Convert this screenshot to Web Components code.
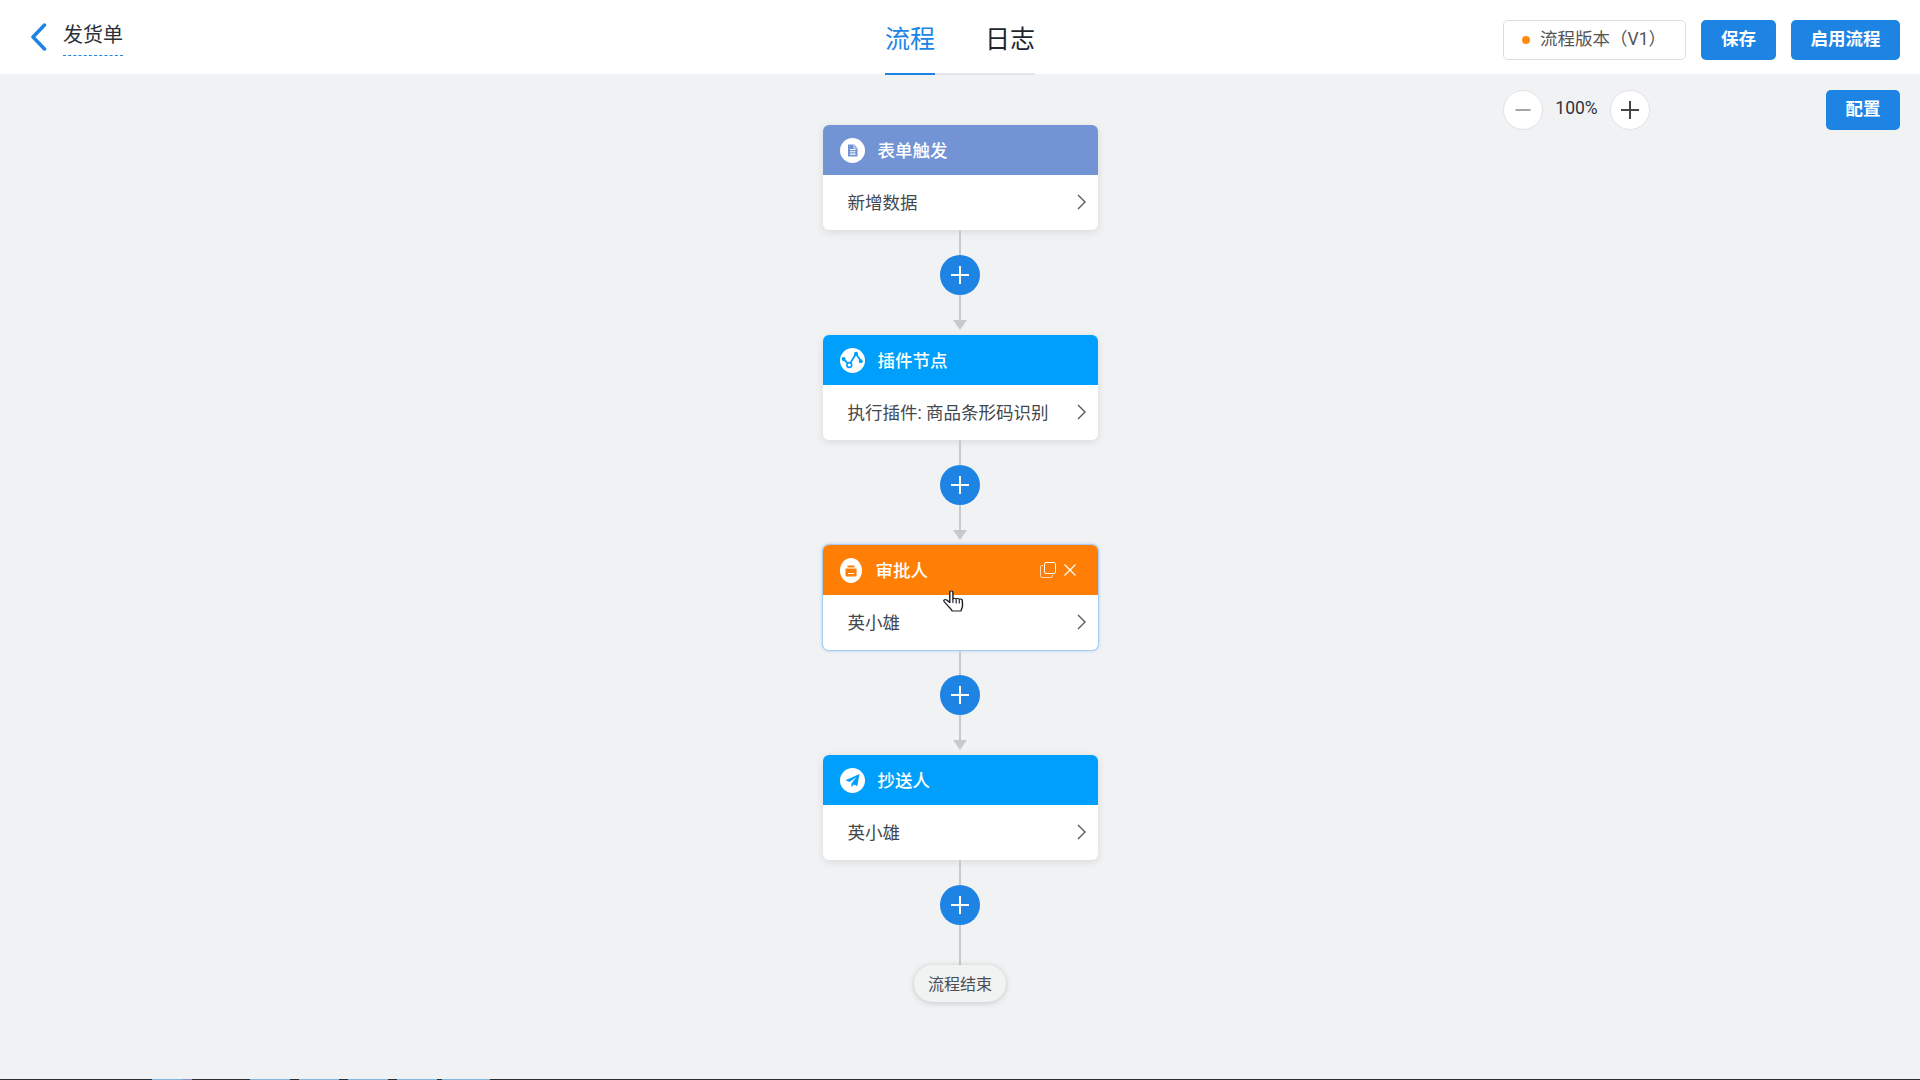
<!DOCTYPE html>
<html lang="zh">
<head>
<meta charset="utf-8">
<title>发货单</title>
<style>
  html, body { margin: 0; height: 100%; }
  body { font-family: Roboto, "Noto Sans CJK SC", sans-serif; overflow: hidden; }
</style>
</head>
<body>
<flow-app>
  <top-bar slot="top">
    <back-title slot="left">发货单</back-title>
    <tab-item slot="center" active>流程</tab-item>
    <tab-item slot="center" wide>日志</tab-item>
    <version-box slot="right">流程版本（V1）</version-box>
    <action-button slot="right" width="75">保存</action-button>
    <action-button slot="right" width="109">启用流程</action-button>
  </top-bar>

  <flow-node color="#7294d4" label="表单触发">
    <svg slot="icon" width="25" height="25" viewBox="0 0 25 25"><circle cx="12.5" cy="12.5" r="12.5" fill="#fff"/><path d="M8 6.5h6.2L17.5 10v8.5H8z" fill="#7294d4"/><path d="M10 11.5h5.500M10 13.800h5.500M10 16.100h5.500" stroke="#fff" stroke-width="1.100"/><path d="M14 6.500v3.500h3.500" fill="none" stroke="#fff" stroke-width=".8"/></svg>
    新增数据
  </flow-node>
  <flow-link arrow></flow-link>

  <flow-node color="#009ffb" label="插件节点">
    <svg slot="icon" width="25" height="25" viewBox="0 0 25 25"><circle cx="12.500" cy="12.500" r="12.500" fill="#fff"/><path d="M3.300 11l6 5.700L16 5.700l5 7.600" fill="none" stroke="#009ffb" stroke-width="1.800"/><circle cx="3.600" cy="11" r="2" fill="#009ffb"/><circle cx="16" cy="5.700" r="2" fill="#009ffb"/><circle cx="20.800" cy="13.300" r="2" fill="#009ffb"/><circle cx="9.300" cy="17" r="2.400" fill="#fff" stroke="#009ffb" stroke-width="1.600"/></svg>
    执行插件: 商品条形码识别
  </flow-node>
  <flow-link arrow></flow-link>

  <flow-node color="#ff7f06" label="审批人" active>
    <svg slot="icon" width="22" height="25" viewBox="0 0 22 25"><ellipse cx="11" cy="12.500" rx="11" ry="12.500" fill="#fff"/><path d="M7.500 7.500h7v2h-7zM5.500 10.500h11v7a1 1 0 0 1-1 1h-9a1 1 0 0 1-1-1z" fill="#ff7f06"/><path d="M8 15.500h6" stroke="#fff" stroke-width="1"/></svg>
    <svg slot="tools" width="36" height="16" viewBox="0 0 36 16" fill="none" stroke="#fff"><rect x="4.500" y=".500" width="11" height="11" rx="1.500" opacity=".95"/><path d="M3 3.500H2A1.500 1.500 0 0 0 .500 5v9A1.500 1.500 0 0 0 2 15.500h9a1.500 1.500 0 0 0 1.500-1.500v-1" opacity=".7"/><path d="M24.500 2.500l11 11M35.500 2.500l-11 11" stroke-width="1.200"/></svg>
    英小雄
  </flow-node>
  <flow-link arrow></flow-link>

  <flow-node color="#009ffb" label="抄送人">
    <svg slot="icon" width="25" height="25" viewBox="0 0 25 25"><circle cx="12.500" cy="12.500" r="12.500" fill="#fff"/><path d="M19.500 6L5.500 12.200l4 1.800 7-5-5 6.200v4l2.300-2.800 3.500 1.600z" fill="#009ffb"/></svg>
    英小雄
  </flow-node>
  <flow-link></flow-link>
  <flow-end>流程结束</flow-end>

  <zoom-bar slot="tools">
    <action-button slot="action" width="74">配置</action-button>
  </zoom-bar>

  <hand-cursor slot="overlay"></hand-cursor>
  <task-edge slot="bottom"></task-edge>
</flow-app>

<script>
class FlowApp extends HTMLElement {
  constructor() {
    super();
    this.attachShadow({ mode: "open" });
    this.shadowRoot.innerHTML = `
      <style>
        :host { display: flex; flex-direction: column; width: 1920px; height: 1080px; background: #f1f2f4; position: relative; overflow: hidden; }
        .canvas { flex: 1; display: grid; grid-template-columns: 1fr 275px 1fr; min-height: 0; }
        .flow { grid-column: 2; display: flex; flex-direction: column; align-items: center; padding-top: 51px; }
        .side { grid-column: 3; padding: 16px 20px 0 0; display: flex; justify-content: flex-end; align-items: flex-start; }
      </style>
      <slot name="top"></slot>
      <div class="canvas">
        <div class="flow"><slot></slot></div>
        <div class="side"><slot name="tools"></slot></div>
      </div>
      <slot name="overlay"></slot>
      <slot name="bottom"></slot>
    `;
  }
}

class TopBar extends HTMLElement {
  constructor() {
    super();
    this.attachShadow({ mode: "open" });
    this.shadowRoot.innerHTML = `
      <style>
        :host { display: grid; grid-template-columns: 1fr auto 1fr; height: 74px; background: #fff; flex: none; }
        .left { display: flex; padding-left: 30px; }
        .center { display: flex; height: 75px; position: relative; z-index: 1; }
        .right { display: flex; justify-content: flex-end; align-items: flex-start; gap: 15px; padding: 20px 20px 0 0; }
      </style>
      <div class="left"><slot name="left"></slot></div>
      <div class="center"><slot name="center"></slot></div>
      <div class="right"><slot name="right"></slot></div>
    `;
  }
}

class BackTitle extends HTMLElement {
  constructor() {
    super();
    this.attachShadow({ mode: "open" });
    this.shadowRoot.innerHTML = `
      <style>
        :host { display: flex; align-items: flex-start; color: #2c3038; font-size: 20px; }
        svg { margin-top: 23px; display: block; }
        .name { margin-left: 16px; margin-top: 20px; height: 35px; line-height: 30px; border-bottom: 1px dashed #1e84e4; }
      </style>
      <svg width="17" height="28" viewBox="0 0 17 28" fill="none"><path d="M14.500 2L3 14l11.500 12" stroke="#1e84e4" stroke-width="3.500" stroke-linecap="round" stroke-linejoin="round"/></svg>
      <div class="name"><slot></slot></div>
    `;
  }
}

class TabItem extends HTMLElement {
  constructor() {
    super();
    this.attachShadow({ mode: "open" });
    this.shadowRoot.innerHTML = `
      <style>
        :host { display: flex; box-sizing: border-box; width: 50px; height: 75px; justify-content: center; padding-top: 22px; font-size: 25px; line-height: 36px; color: #22262e; border-bottom: 2px solid #e4e5ea; }
        :host([wide]) { width: 100px; justify-content: flex-end; }
        :host([active]) { color: #1e84e4; border-bottom-color: #1e84e4; }
      </style>
      <slot></slot>
    `;
  }
}

class VersionBox extends HTMLElement {
  constructor() {
    super();
    this.attachShadow({ mode: "open" });
    this.shadowRoot.innerHTML = `
      <style>
        :host { display: flex; align-items: center; box-sizing: border-box; width: 183px; height: 40px; padding: 0 0 0 18px; gap: 10px; background: #fff; border: 1px solid #dcdde2; border-radius: 5px; color: #555; font-size: 17.500px; }
        i { width: 8px; height: 8px; border-radius: 50%; background: #ff8a0c; flex: none; }
        span { position: relative; top: -3px; }
      </style>
      <i></i><span><slot></slot></span>
    `;
  }
}

class ActionButton extends HTMLElement {
  constructor() {
    super();
    this.attachShadow({ mode: "open" });
    this.shadowRoot.innerHTML = `
      <style>
        :host { display: flex; align-items: center; justify-content: center; box-sizing: border-box; height: 40px; padding-bottom: 5px; background: #1e84e4; color: #fff; border-radius: 5px; font-size: 17.500px; font-weight: 700; flex: none; }
      </style>
      <slot></slot>
    `;
  }
  connectedCallback() {
    this.style.width = this.getAttribute("width") + "px";
  }
}

class ZoomBar extends HTMLElement {
  constructor() {
    super();
    this.attachShadow({ mode: "open" });
    this.shadowRoot.innerHTML = `
      <style>
        :host { display: flex; align-items: center; width: 397px; height: 40px; }
        .round { box-sizing: border-box; width: 40px; height: 40px; border-radius: 50%; background: #fff; border: 1px solid #e2e3e7; display: flex; align-items: center; justify-content: center; }
        .pct { width: 67px; text-align: center; font-size: 17.500px; color: #30343b; position: relative; top: -2px; }
        .gap { flex: 1; }
      </style>
      <div class="round"><svg width="16" height="16" viewBox="0 0 16 16"><path d="M.5 8h15" stroke="#888" stroke-width="1.500"/></svg></div>
      <div class="pct">100%</div>
      <div class="round"><svg width="18" height="18" viewBox="0 0 18 18"><path d="M0 9h18M9 0v18" stroke="#444" stroke-width="2"/></svg></div>
      <div class="gap"></div>
      <slot name="action"></slot>
    `;
  }
}

class FlowNode extends HTMLElement {
  constructor() {
    super();
    this.attachShadow({ mode: "open" });
    this.shadowRoot.innerHTML = `
      <style>
        :host { display: block; width: 275px; height: 105px; flex: none; background: #fff; border-radius: 6px; box-shadow: 0 2px 8px rgba(0,0,0,.1); font-size: 17.500px; }
        :host([active]) { box-shadow: 0 0 0 1px #a5cdf5, 0 0 3px 1px rgba(110,175,240,.5); }
        .head { display: flex; align-items: center; height: 50px; padding: 0 22px 0 17px; border-radius: 6px 6px 0 0; color: #fff; font-weight: 500; }
        .icon { display: flex; margin-right: 13px; }
        :host([active]) .icon { margin-right: 14px; }
        .label { flex: 1; position: relative; top: -1px; }
        .body { display: flex; align-items: center; justify-content: space-between; height: 55px; padding: 0 12px 0 25px; color: #43474e; }
        .body span { position: relative; top: -1px; }
        .body svg { position: relative; top: -1px; }
        ::slotted([slot=tools]) { display: block; }
      </style>
      <div class="head">
        <span class="icon"><slot name="icon"></slot></span>
        <span class="label"></span>
        <slot name="tools"></slot>
      </div>
      <div class="body">
        <span><slot></slot></span>
        <svg width="9" height="16" viewBox="0 0 9 16" fill="none"><path d="M1 1l7 7-7 7" stroke="#55585e" stroke-width="1.400"/></svg>
      </div>
    `;
  }
  connectedCallback() {
    this.shadowRoot.querySelector(".head").style.background = this.getAttribute("color");
    this.shadowRoot.querySelector(".label").textContent = this.getAttribute("label");
  }
}

class FlowLink extends HTMLElement {
  constructor() {
    super();
    this.attachShadow({ mode: "open" });
    this.shadowRoot.innerHTML = `
      <style>
        :host { display: flex; flex-direction: column; align-items: center; height: 105px; flex: none; }
        .line { width: 2px; height: 25px; background: #c8c9cc; flex: none; }
        :host(:not([arrow])) .add + .line { height: 40px; }
        .add { width: 40px; height: 40px; border-radius: 50%; background: #1e84e4; display: flex; align-items: center; justify-content: center; flex: none; }
        .tip { width: 0; height: 0; border: 7px solid transparent; border-top: 10px solid #c8c9cc; border-bottom: 0; display: none; }
        :host([arrow]) .tip { display: block; }
      </style>
      <div class="line"></div>
      <div class="add"><svg width="18" height="18" viewBox="0 0 18 18"><path d="M0 9h18M9 0v18" stroke="#fff" stroke-width="2"/></svg></div>
      <div class="line"></div>
      <div class="tip"></div>
    `;
  }
}

class FlowEnd extends HTMLElement {
  constructor() {
    super();
    this.attachShadow({ mode: "open" });
    this.shadowRoot.innerHTML = `
      <style>
        :host { display: flex; align-items: center; justify-content: center; box-sizing: border-box; width: 92px; height: 37px; padding-bottom: 2px; flex: none; border-radius: 19px; background: #f1f2f2; box-shadow: 0 1px 6px rgba(0,0,0,.18); color: #4a4d52; font-size: 16px; }
      </style>
      <slot></slot>
    `;
  }
}

// pointer caught in the screenshot, it floats over the approver card
class HandCursor extends HTMLElement {
  constructor() {
    super();
    this.attachShadow({ mode: "open" });
    this.shadowRoot.innerHTML = `
      <style>
        :host { position: absolute; left: 942px; top: 590px; width: 26px; height: 24px; }
        svg { display: block; }
      </style>
      <svg width="26" height="24" viewBox="0 0 20 24" preserveAspectRatio="none"><path d="M6 2.200c0-1.600 2.400-1.600 2.400 0V9c.3-1 2.300-1 2.500.2.300-1 2.200-.9 2.400.3.400-.8 2.200-.5 2.300.8l.2 5.200c0 2-.8 3-1.200 5.500H7.800c-.5-1.800-2.200-3.500-3.500-5.500L1.600 11.500c-.8-1.500 1-2.500 2-1.500L6 12.500z" fill="#fff" stroke="#1d2129" stroke-width="1.100" stroke-linejoin="round"/><path d="M8.400 9v4M10.900 9.500v4M13.300 10v3.500" stroke="#1d2129" stroke-width=".9"/></svg>
    `;
  }
}

class TaskEdge extends HTMLElement {
  constructor() {
    super();
    this.attachShadow({ mode: "open" });
    this.shadowRoot.innerHTML = `
      <style>
        :host { display: block; height: 1px; flex: none; background: linear-gradient(90deg,
          #2a2e35 152px, #7fb8e0 152px, #7fb8e0 183px, #8a8fc8 183px, #8a8fc8 192px, #2a2e35 192px,
          #2a2e35 250px, #7fb8e0 250px, #7fb8e0 290px, #2a2e35 290px,
          #2a2e35 299px, #7fb8e0 299px, #7fb8e0 339px, #2a2e35 339px,
          #2a2e35 348px, #7fb8e0 348px, #7fb8e0 388px, #2a2e35 388px,
          #2a2e35 397px, #7fb8e0 397px, #7fb8e0 437px, #2a2e35 437px,
          #2a2e35 442px, #7fb8e0 442px, #7fb8e0 490px, #2a2e35 490px); }
      </style>
    `;
  }
}

customElements.define("flow-app", FlowApp);
customElements.define("top-bar", TopBar);
customElements.define("back-title", BackTitle);
customElements.define("tab-item", TabItem);
customElements.define("version-box", VersionBox);
customElements.define("action-button", ActionButton);
customElements.define("zoom-bar", ZoomBar);
customElements.define("flow-node", FlowNode);
customElements.define("flow-link", FlowLink);
customElements.define("flow-end", FlowEnd);
customElements.define("hand-cursor", HandCursor);
customElements.define("task-edge", TaskEdge);
</script>
</body>
</html>
